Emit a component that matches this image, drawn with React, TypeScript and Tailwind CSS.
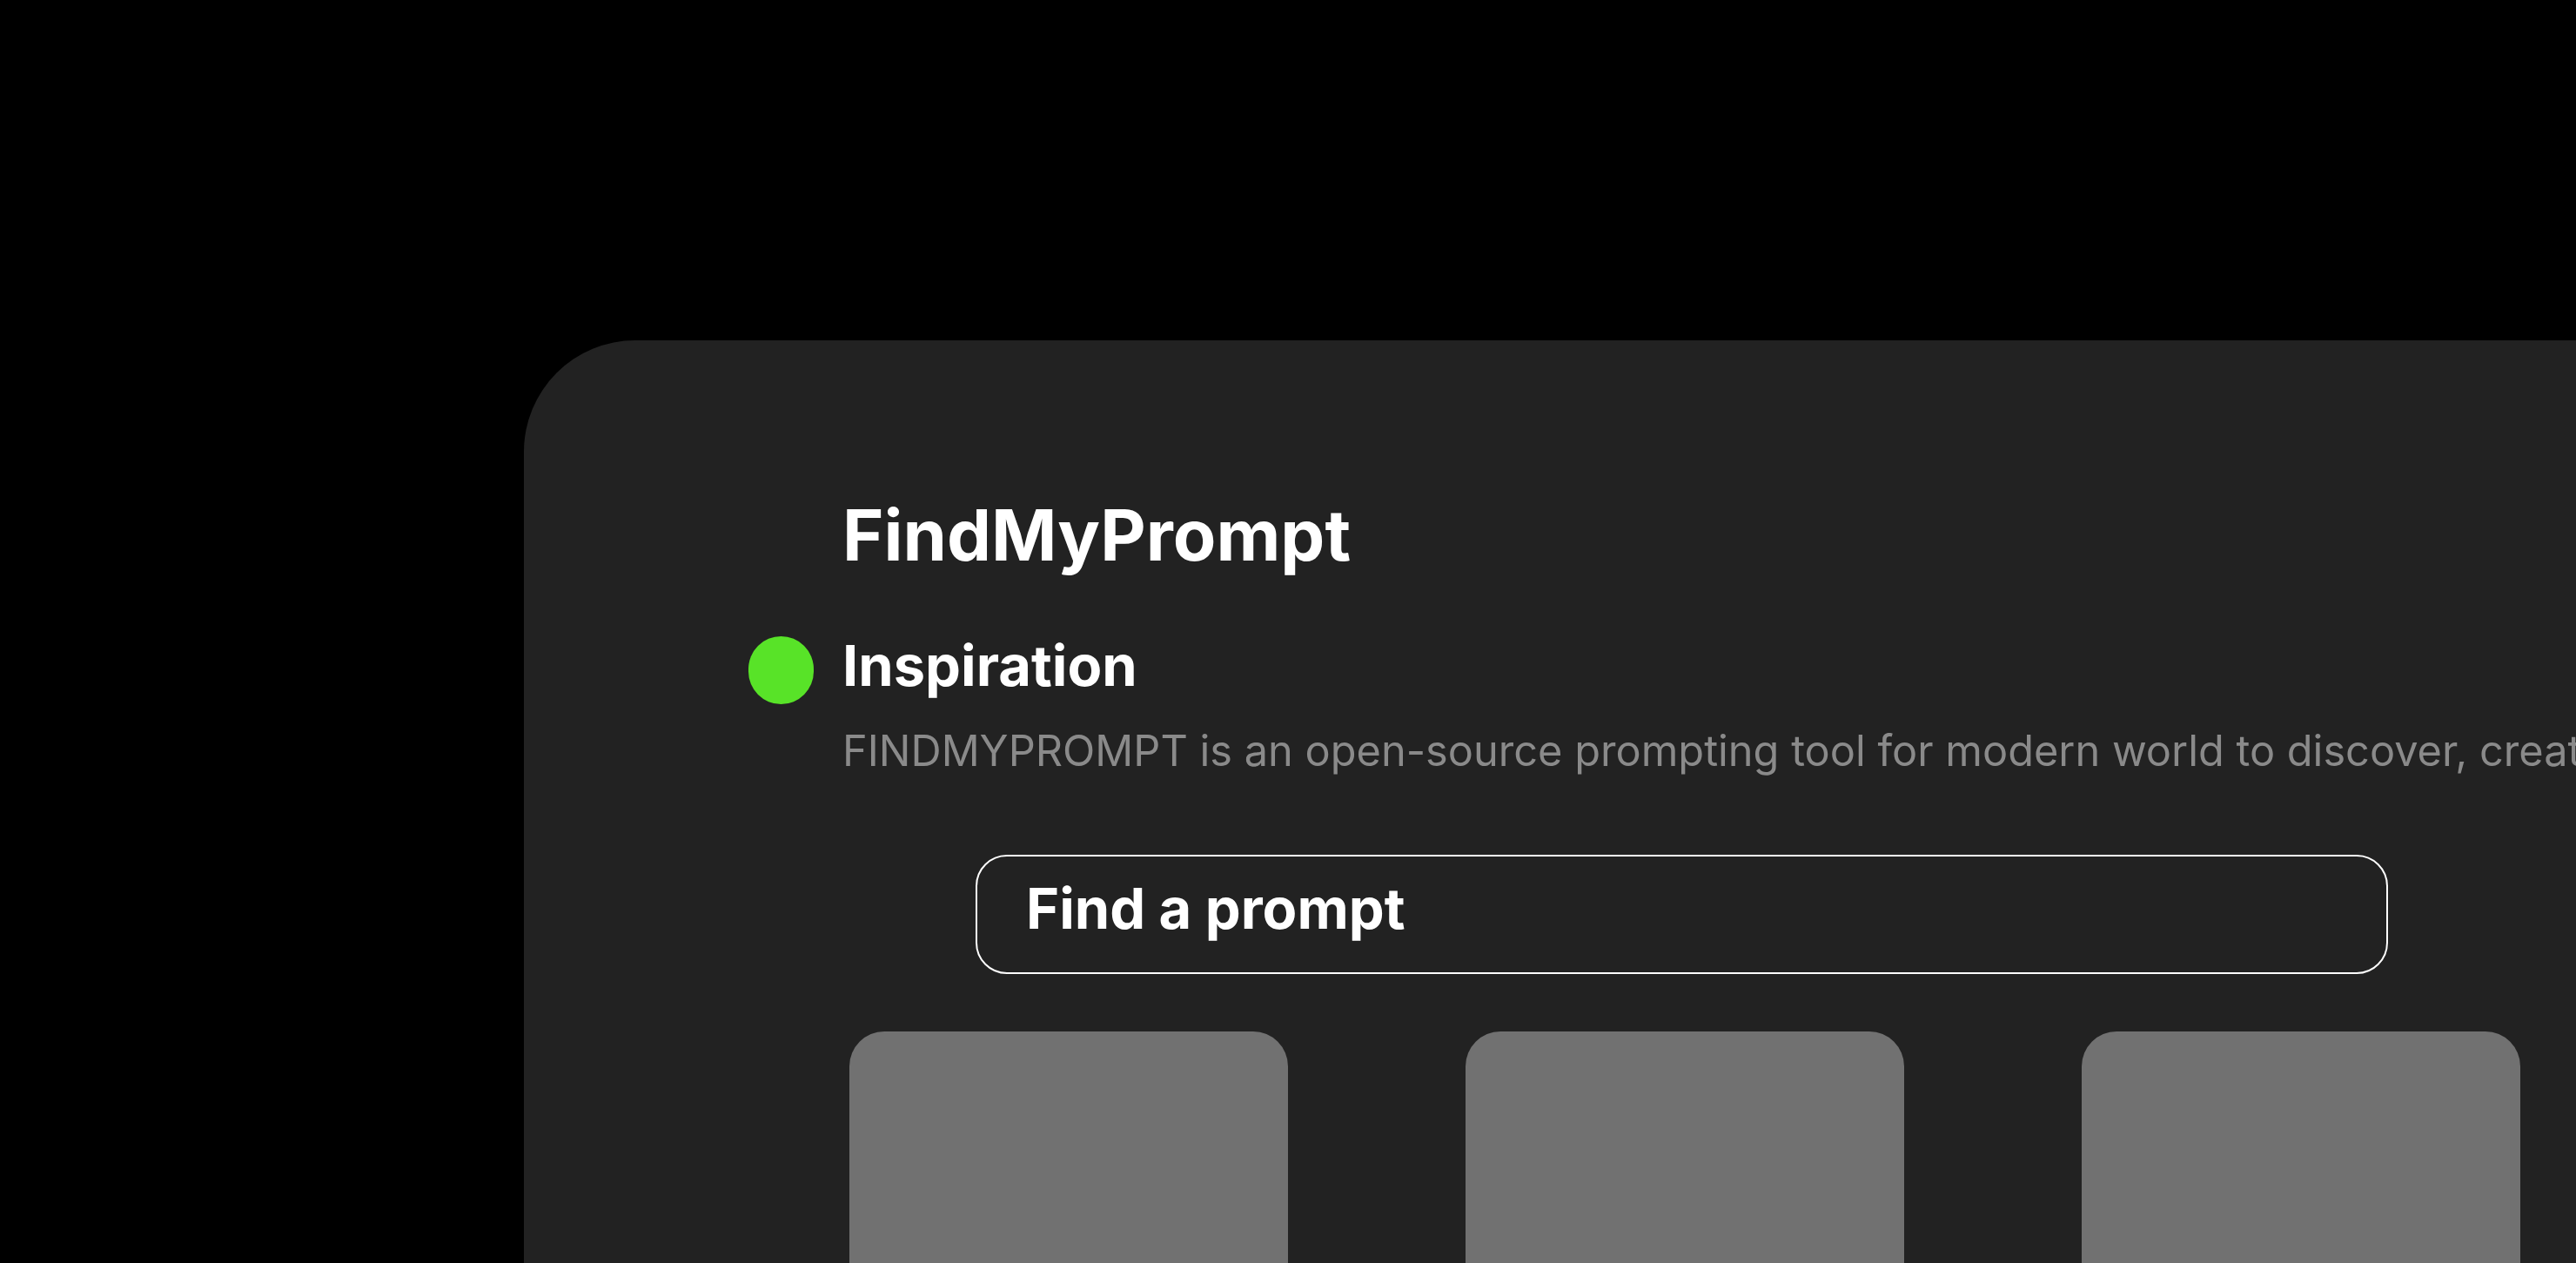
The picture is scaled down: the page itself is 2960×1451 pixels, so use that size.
import React from "react";

export default function App() {
  const cards = [0, 1, 2];
  return (
    <div className="w-[2960px] h-[1451px] overflow-hidden bg-black" style={{ fontFamily: "Inter, 'Noto Sans', sans-serif" }}>
      <div className="ml-[602px] mt-[391px] w-[2600px] h-[1400px] rounded-[128px] bg-[#222222] pl-[366px] pt-[184px]">
        <div className="w-[1932px]">
          <h1 className="text-[81px] leading-none font-bold text-white">FindMyPrompt</h1>
          <div className="relative mt-[76px]">
            <span className="absolute left-[-108px] top-[-1px] w-[75px] h-[78px] rounded-full bg-[#58e328]" />
            <h2 className="text-[65px] leading-none font-bold text-white">Inspiration</h2>
          </div>
          <p className="mt-[42px] text-[48.7px] leading-none text-[#8a8a8a] whitespace-nowrap">
            FINDMYPROMPT is an open-source prompting tool for modern world to discover, create and share prompts.
          </p>
          <div className="mt-[94px] ml-[153px] w-[1623px] h-[137px] rounded-[36px] border-2 border-white pl-[56px] pt-[27px]">
            <span className="text-[65px] leading-none font-bold text-white">Find a prompt</span>
          </div>
          <div className="mt-[66px] ml-[8px] flex gap-[204px]">
            {cards.map((c) => (
              <div key={c} className="w-[504px] h-[600px] rounded-[40px] bg-[#717171]" />
            ))}
          </div>
        </div>
      </div>
    </div>
  );
}
